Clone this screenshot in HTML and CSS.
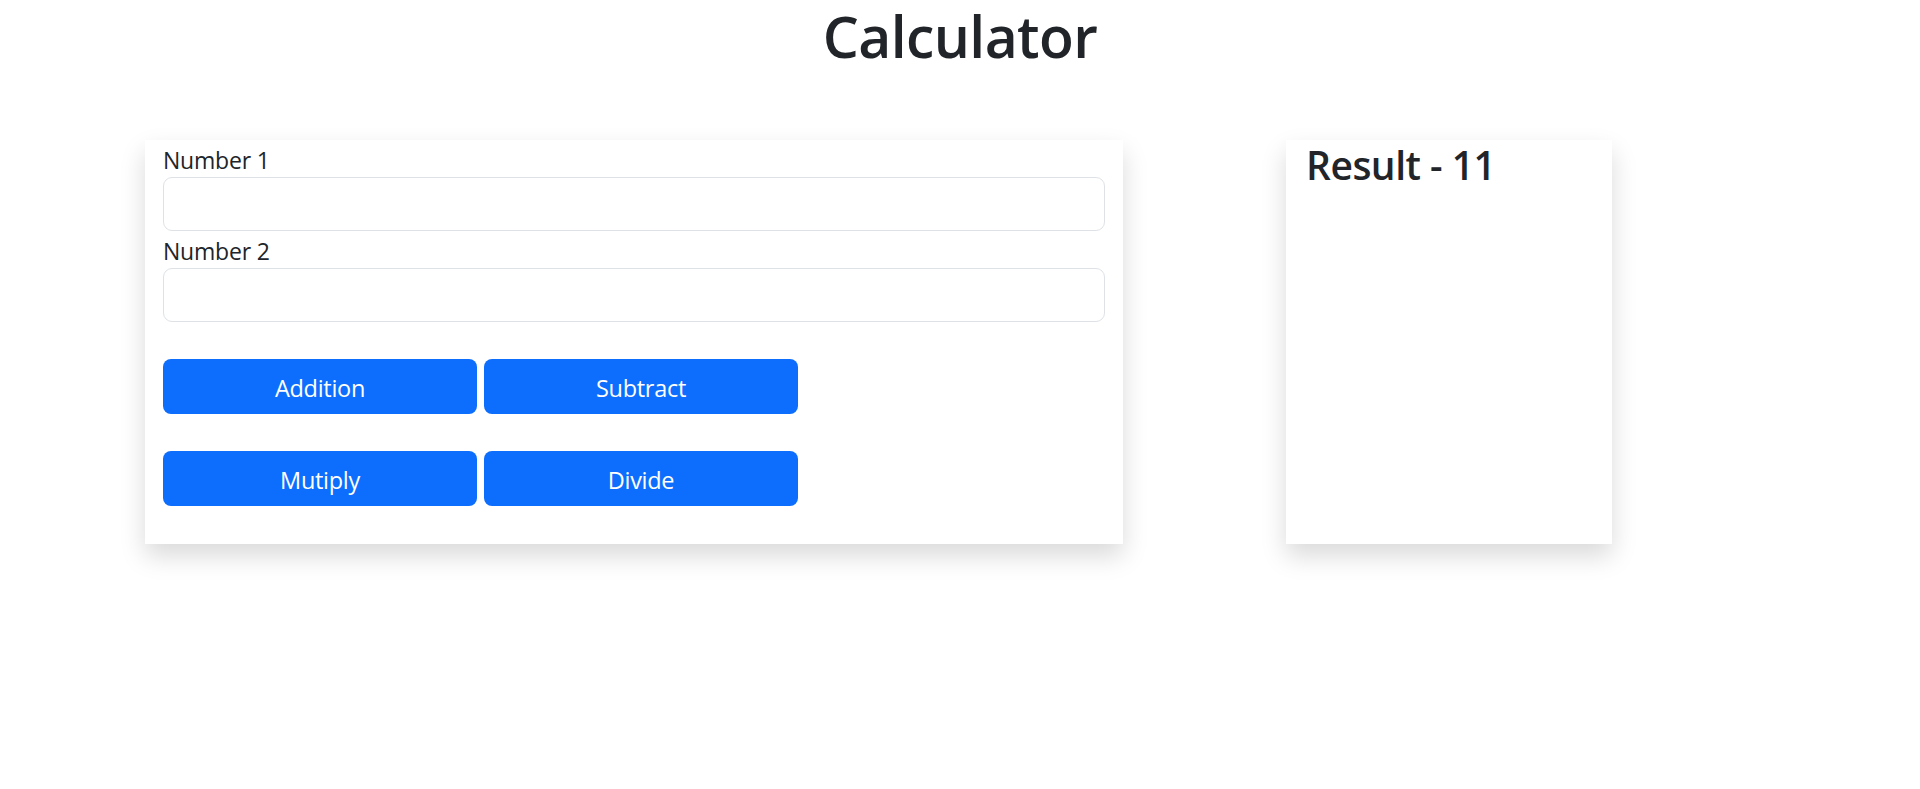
FILE: index.html
```html
<!DOCTYPE html>
<html lang="en">
<head>
<meta charset="utf-8">
<title>Calculator</title>
<link rel="stylesheet" href="styles.css">
</head>
<body>
  <h1 class="title">Calculator</h1>
  <div class="layout">
    <div class="card calc">
      <label class="label" for="n1">Number 1</label>
      <input class="input" id="n1" type="text">
      <label class="label label-2" for="n2">Number 2</label>
      <input class="input" id="n2" type="text">
      <div class="btn-row">
        <button class="btn">Addition</button>
        <button class="btn">Subtract</button>
      </div>
      <div class="btn-row">
        <button class="btn">Mutiply</button>
        <button class="btn">Divide</button>
      </div>
    </div>
    <div class="card result">
      <h2 class="result-text">Result - 11</h2>
    </div>
  </div>
</body>
</html>
```

FILE: styles.css
```css
html, body {
  margin: 0;
  padding: 0;
  background: #ffffff;
}
body {
  font-family: "Open Sans", "Noto Sans", sans-serif;
  color: #212529;
  min-height: 789px;
}
.title {
  margin: 0;
  padding-top: 6px;
  height: 140px;
  box-sizing: border-box;
  font-size: 57px;
  line-height: 60px;
  font-weight: 600;
  text-align: center;
  letter-spacing: -0.6px;
}
.layout {
  display: flex;
  align-items: stretch;
  gap: 163px;
  margin-left: 145px;
}
.card {
  background: #fff;
  box-shadow: 0 12px 24px rgba(0, 0, 0, 0.15);
  box-sizing: border-box;
  height: 404px;
}
.calc {
  width: 978px;
  padding: 3px 18px 0 18px;
  display: flex;
  flex-direction: column;
}
.label {
  display: block;
  font-size: 23px;
  line-height: 34px;
  height: 34px;
  letter-spacing: -0.2px;
}
.label-2 {
  margin-top: 3px;
}
.input {
  display: block;
  width: 942px;
  height: 54px;
  box-sizing: border-box;
  border: 1px solid #dee2e6;
  border-radius: 9px;
  background: #fff;
  margin: 0;
  padding: 0 16px;
  font: inherit;
  outline: none;
}
.btn-row {
  display: flex;
  gap: 7px;
  margin-top: 37px;
}
.btn {
  width: 314px;
  height: 55px;
  box-sizing: border-box;
  border: none;
  border-radius: 8px;
  background: #0d6efd;
  color: #fff;
  font-family: "Open Sans", "Noto Sans", sans-serif;
  font-size: 23.5px;
  letter-spacing: -0.3px;
  padding: 3px 0 0 0;
  margin: 0;
  cursor: pointer;
}
.result {
  width: 326px;
  padding: 2px 20px 0 20px;
}
.result-text {
  margin: 0;
  font-size: 39px;
  line-height: 46px;
  font-weight: 600;
  letter-spacing: -0.5px;
}
```
